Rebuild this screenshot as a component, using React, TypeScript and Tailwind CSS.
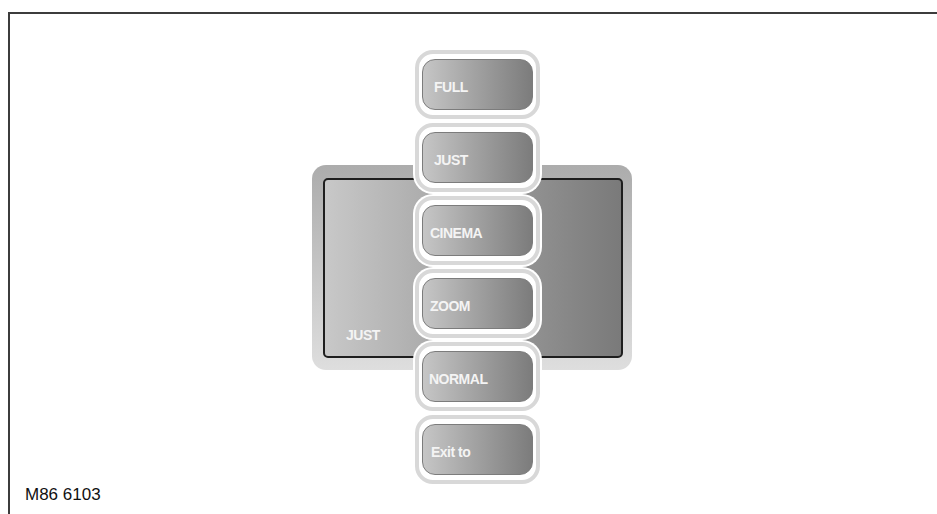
import React from "react";

const items = [
  { label: "FULL", pad: "pl-[11px]" },
  { label: "JUST", pad: "pl-[11px]" },
  { label: "CINEMA", pad: "pl-[7px]" },
  { label: "ZOOM", pad: "pl-[7px]" },
  { label: "NORMAL", pad: "pl-[6px]" },
  { label: "Exit to", pad: "pl-[8px]" },
];

const MenuButton = ({ label, pad }: { label: string; pad: string }) => (
  <div className="h-[73px] rounded-[20px] bg-white p-[2px]">
    <div className="h-full rounded-[18px] border-[4px] border-[#d8d8d8] bg-white px-[3px] py-[5px]">
      <div
        className={`flex h-full items-center rounded-[13px] border border-[#7c7c7c] bg-gradient-to-r from-[#c6c6c6] to-[#7c7c7c] pt-[5px] ${pad}`}
      >
        <span className="text-[14px] font-bold tracking-[-0.5px] text-[#f4f4f4]">
          {label}
        </span>
      </div>
    </div>
  </div>
);

export default function App() {
  return (
    <div
      className="h-[514px] w-[937px] overflow-hidden bg-white"
      style={{ fontFamily: '"Liberation Sans", Arial, sans-serif' }}
    >
      <div className="ml-[8px] mt-[12px] flex h-[502px] flex-col border-l-2 border-t-2 border-[#3c3c3c]">
        <div className="grid">
          {/* screen panel */}
          <div className="col-start-1 row-start-1 ml-[302px] mt-[151px] h-[205px] w-[320px] rounded-[14px] bg-gradient-to-b from-[#acacac] to-[#dedede] pb-[12px] pl-[11px] pr-[9px] pt-[13px]">
            <div className="flex h-full items-end rounded-[5px] border-2 border-[#1e1e1e] bg-gradient-to-r from-[#c8c8c8] to-[#7a7a7a] pb-[10px] pl-[21px]">
              <span className="text-[14px] font-bold tracking-[-0.5px] text-[#f4f4f4]">
                JUST
              </span>
            </div>
          </div>
          {/* menu column */}
          <div className="col-start-1 row-start-1 ml-[403px] mt-[34px] flex w-[129px] flex-col">
            {items.map((it) => (
              <MenuButton key={it.label} label={it.label} pad={it.pad} />
            ))}
          </div>
        </div>
        <div className="ml-[15px] text-[17px] leading-none text-[#111]">
          M86 6103
        </div>
      </div>
    </div>
  );
}
